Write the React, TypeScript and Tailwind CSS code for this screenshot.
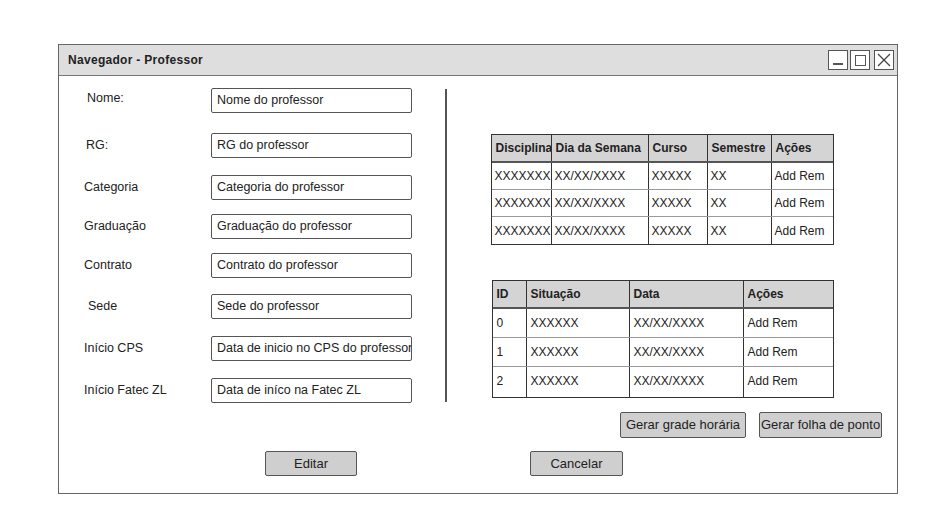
const font = "font-['Liberation_Sans',Arial,sans-serif]";

const fields = [
  { label: "Nome:", placeholder: "Nome do professor", mt: "mt-[12px]", lab: "pl-[3px] -mt-[4px]" },
  { label: "RG:", placeholder: "RG do professor", mt: "mt-[20px]", lab: "pl-[2px]" },
  { label: "Categoria", placeholder: "Categoria do professor", mt: "mt-[17px]", lab: "" },
  { label: "Graduação", placeholder: "Graduação do professor", mt: "mt-[14px]", lab: "" },
  { label: "Contrato", placeholder: "Contrato do professor", mt: "mt-[14px]", lab: "" },
  { label: "Sede", placeholder: "Sede do professor", mt: "mt-[16px]", lab: "pl-[4px]" },
  { label: "Início CPS", placeholder: "Data de inicio no CPS do professor", mt: "mt-[17px]", lab: "" },
  { label: "Início Fatec ZL", placeholder: "Data de iníco na Fatec ZL", mt: "mt-[17px]", lab: "" },
];

function WinButton({ children }: { children: React.ReactNode }) {
  return (
    <div className="w-[20px] h-[20px] border-[1.5px] border-[#555] bg-white flex items-center justify-center">
      {children}
    </div>
  );
}

function Btn({ label, w, h = "h-[25px]" }: { label: string; w: string; h?: string }) {
  return (
    <div
      className={`${w} ${h} bg-[#cfcfcf] border-[1.5px] border-[#555] rounded-[2px] flex items-center justify-center text-[13px] text-[#222]`}
    >
      {label}
    </div>
  );
}

const t1cols = ["w-[60px]", "w-[97px]", "w-[59px]", "w-[64px]", "flex-1"];
const t1head = ["Disciplina", "Dia da Semana", "Curso", "Semestre", "Ações"];
const t1row = ["XXXXXXX", "XX/XX/XXXX", "XXXXX", "XX", "Add Rem"];

const t2cols = ["w-[34px]", "w-[103px]", "w-[114px]", "flex-1"];
const t2head = ["ID", "Situação", "Data", "Ações"];
const t2rows = [
  { cells: ["0", "XXXXXX", "XX/XX/XXXX", "Add Rem"], h: "h-[29px]" },
  { cells: ["1", "XXXXXX", "XX/XX/XXXX", "Add Rem"], h: "h-[29px]" },
  { cells: ["2", "XXXXXX", "XX/XX/XXXX", "Add Rem"], h: "h-[30px]" },
];

export default function App() {
  return (
    <div className={`w-[944px] h-[526px] bg-white overflow-hidden ${font} text-[#222]`}>
      <div className="ml-[58px] mt-[44px] w-[840px] h-[450px] border-[1.5px] border-[#666] flex flex-col">
        {/* title bar */}
        <div className="h-[31px] bg-[#dedede] border-b-[1.5px] border-[#777] flex items-center pl-[9px] pr-[3px] shrink-0">
          <div className="text-[12px] font-bold flex-1 tracking-[0.3px]">Navegador - Professor</div>
          <div className="flex gap-[2px] items-center">
            <WinButton>
              <div className="w-[10px] h-[2px] bg-[#555] mt-[8px]" />
            </WinButton>
            <WinButton>
              <div className="w-[11px] h-[11px] border-[1.5px] border-[#555]" />
            </WinButton>
            <div className="ml-[2px]">
              <WinButton>
                <svg width="14" height="14" viewBox="0 0 14 14">
                  <path d="M1 1 L13 13 M13 1 L1 13" stroke="#444" strokeWidth="1.3" />
                </svg>
              </WinButton>
            </div>
          </div>
        </div>

        {/* body */}
        <div className="flex flex-col">
          <div className="flex">
            {/* form */}
            <div className="w-[386px] pl-[25px] flex flex-col shrink-0">
              {fields.map((f) => (
                <div key={f.label} className={`flex items-center ${f.mt}`}>
                  <div className={`w-[127px] text-[12.5px] ${f.lab}`}>{f.label}</div>
                  <div className="w-[201px] h-[25px] border-[1.5px] border-[#555] rounded-[2px] bg-white flex items-center pl-[5px] text-[12.5px] whitespace-nowrap overflow-hidden">
                    {f.placeholder}
                  </div>
                </div>
              ))}
            </div>

            <div className="w-[1.5px] bg-[#555] mt-[13px] h-[313px] shrink-0" />

            {/* tables */}
            <div className="flex-1 pl-[44px] pt-[58px] flex flex-col">
              <div className="w-[343px] border-[1.5px] border-[#333] text-[12px]">
                <div className="flex h-[28px] bg-[#d4d4d4] border-b-[2px] border-[#555] font-bold">
                  {t1head.map((h, i) => (
                    <div
                      key={h}
                      className={`${t1cols[i]} ${i < 4 ? "border-r-[1.5px] border-[#333]" : ""} pl-[4px] flex items-center whitespace-nowrap overflow-hidden`}
                    >
                      {h}
                    </div>
                  ))}
                </div>
                {[0, 1, 2].map((r) => (
                  <div key={r} className={`flex h-[27px] ${r < 2 ? "border-b-[1.5px] border-[#999]" : ""}`}>
                    {t1row.map((c, i) => (
                      <div
                        key={i}
                        className={`${t1cols[i]} ${i < 4 ? "border-r-[1.5px] border-[#333]" : ""} pl-[3px] flex items-center whitespace-nowrap overflow-hidden`}
                      >
                        {c}
                      </div>
                    ))}
                  </div>
                ))}
              </div>

              <div className="w-[342px] ml-[1px] mt-[35px] border-[1.5px] border-[#333] text-[12px]">
                <div className="flex h-[28px] bg-[#d4d4d4] border-b-[2px] border-[#555] font-bold">
                  {t2head.map((h, i) => (
                    <div
                      key={h}
                      className={`${t2cols[i]} ${i < 3 ? "border-r-[1.5px] border-[#333]" : ""} pl-[4px] flex items-center whitespace-nowrap overflow-hidden`}
                    >
                      {h}
                    </div>
                  ))}
                </div>
                {t2rows.map((row, r) => (
                  <div key={r} className={`flex ${row.h} ${r < 2 ? "border-b-[1.5px] border-[#999]" : ""}`}>
                    {row.cells.map((c, i) => (
                      <div
                        key={i}
                        className={`${t2cols[i]} ${i < 3 ? "border-r-[1.5px] border-[#333]" : ""} pl-[4px] pt-[5px] whitespace-nowrap overflow-hidden`}
                      >
                        {c}
                      </div>
                    ))}
                  </div>
                ))}
              </div>

              <div className="flex justify-end gap-[13px] pr-[15px] mt-[14px]">
                <Btn label="Gerar grade horária" w="w-[126px]" h="h-[26px]" />
                <Btn label="Gerar folha de ponto" w="w-[123px]" h="h-[26px]" />
              </div>
            </div>
          </div>

          {/* bottom buttons */}
          <div className="flex mt-[13px] pl-[206px]">
            <Btn label="Editar" w="w-[92px]" />
            <div className="ml-[173px]">
              <Btn label="Cancelar" w="w-[93px]" />
            </div>
          </div>
        </div>
      </div>
    </div>
  );
}
